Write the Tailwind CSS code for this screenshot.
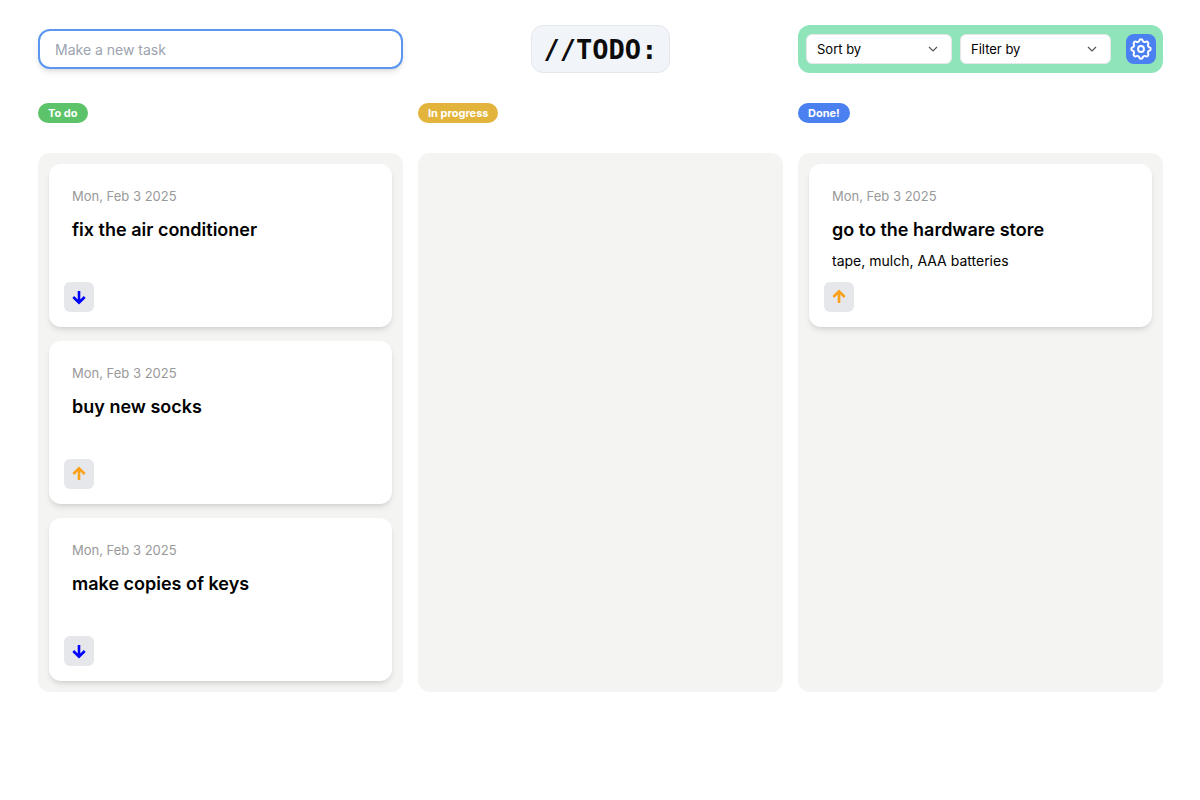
<!DOCTYPE html>
<html lang="en">
<head>
<meta charset="utf-8">
<meta name="viewport" content="width=device-width, initial-scale=1">
<title>//TODO:</title>
<script src="https://cdn.jsdelivr.net/npm/@tailwindcss/browser@4"></script>
</head>
<body class="bg-white text-black font-['Inter',sans-serif]">
<svg class="hidden" aria-hidden="true">
  <symbol id="down" viewBox="0 0 16 16"><path d="M8 2v12M2.3 8L8 13.7 13.7 8" fill="none" stroke="currentColor" stroke-width="2.6"/></symbol>
  <symbol id="up" viewBox="0 0 16 16"><path d="M8 14V2M2.3 8L8 2.3 13.7 8" fill="none" stroke="currentColor" stroke-width="2.6"/></symbol>
  <symbol id="chevron" viewBox="0 0 10 10"><path d="M1 3l4 4 4-4" fill="none" stroke="currentColor" stroke-width="1.2"/></symbol>
</svg>
<div class="pl-[38px] pr-[37px] pt-[25px]">
  <header class="grid grid-cols-3 gap-[15px] items-center">
    <form>
      <input aria-label="Make a new task" type="text" placeholder="Make a new task" class="block w-full h-10 px-[15px] text-[14px] rounded-xl border-2 border-[#5b97f0] bg-white shadow-md placeholder:text-[#9ca3af] outline-none">
    </form>
    <h1 class="justify-self-center rounded-xl border border-[#e4e8ed] bg-[#f1f5f9] h-12 px-3 pt-[2px] flex items-center font-['DejaVu_Sans_Mono',monospace] font-bold text-[27px] text-[#0c0c0c]">//TODO:</h1>
    <div class="flex items-center h-12 rounded-xl bg-[#8fe5b9] pl-2 pr-[7px] text-[13px]">
      <div class="relative flex-[146]">
        <select aria-label="Sort by" class="block w-full h-[30px] appearance-none rounded-md border border-[#e5e7eb] bg-white px-[10px] pt-px"><option>Sort by</option></select>
        <svg class="pointer-events-none absolute right-[14px] top-[10px] size-[10px] text-[#555]"><use href="#chevron"/></svg>
      </div>
      <div class="relative flex-[151] ml-2">
        <select aria-label="Filter by" class="block w-full h-[30px] appearance-none rounded-md border border-[#e5e7eb] bg-white px-[10px] pt-px"><option>Filter by</option></select>
        <svg class="pointer-events-none absolute right-[14px] top-[10px] size-[10px] text-[#555]"><use href="#chevron"/></svg>
      </div>
      <button type="button" aria-label="Settings" class="ml-[15px] size-[30px] shrink-0 flex items-center justify-center rounded-lg bg-[#4b80f0] text-white">
        <svg class="size-[26px]" viewBox="0 0 24 24" fill="none" stroke="currentColor" stroke-width="1.8" stroke-linecap="round" stroke-linejoin="round"><path d="M10.325 4.317c.426-1.756 2.924-1.756 3.35 0a1.724 1.724 0 002.573 1.066c1.543-.94 3.31.826 2.37 2.37a1.724 1.724 0 001.065 2.572c1.756.426 1.756 2.924 0 3.35a1.724 1.724 0 00-1.066 2.573c.94 1.543-.826 3.31-2.37 2.37a1.724 1.724 0 00-2.572 1.065c-.426 1.756-2.924 1.756-3.35 0a1.724 1.724 0 00-2.573-1.066c-1.543.94-3.31-.826-2.37-2.37a1.724 1.724 0 00-1.065-2.572c-1.756-.426-1.756-2.924 0-3.35a1.724 1.724 0 001.066-2.573c-.94-1.543.826-3.31 2.37-2.37.996.608 2.296.07 2.572-1.065z"/><circle cx="12" cy="12" r="2.7"/></svg>
      </button>
    </div>
  </header>

  <main class="mt-[30px] grid grid-cols-3 gap-[15px]">
    <section class="flex flex-col items-start">
      <h2 class="h-5 flex items-center rounded-full bg-[#5dc36a] px-[10px] text-[11px] font-bold text-white">To do</h2>
      <ul class="mt-[30px] w-full grow flex flex-col gap-[14px] rounded-xl bg-[#f4f4f3] p-[11px]">
        <li class="flex h-[163px] flex-col items-start rounded-xl bg-white pt-[22px] px-[15px] pb-[15px] shadow-md">
          <time class="px-2 text-[13px] leading-5 text-[#999]">Mon, Feb 3 2025</time>
          <h3 class="mt-[10px] px-2 text-[18px] leading-7 font-semibold">fix the air conditioner</h3>
          <button type="button" aria-label="Low priority" class="mt-auto size-[30px] flex items-center justify-center rounded-md bg-[#e5e7eb] text-[#0000ff]"><svg class="size-4"><use href="#down"/></svg></button>
        </li>
        <li class="flex h-[163px] flex-col items-start rounded-xl bg-white pt-[22px] px-[15px] pb-[15px] shadow-md">
          <time class="px-2 text-[13px] leading-5 text-[#999]">Mon, Feb 3 2025</time>
          <h3 class="mt-[10px] px-2 text-[18px] leading-7 font-semibold">buy new socks</h3>
          <button type="button" aria-label="High priority" class="mt-auto size-[30px] flex items-center justify-center rounded-md bg-[#e5e7eb] text-[#f9a11b]"><svg class="size-4"><use href="#up"/></svg></button>
        </li>
        <li class="flex h-[163px] flex-col items-start rounded-xl bg-white pt-[22px] px-[15px] pb-[15px] shadow-md">
          <time class="px-2 text-[13px] leading-5 text-[#999]">Mon, Feb 3 2025</time>
          <h3 class="mt-[10px] px-2 text-[18px] leading-7 font-semibold">make copies of keys</h3>
          <button type="button" aria-label="Low priority" class="mt-auto size-[30px] flex items-center justify-center rounded-md bg-[#e5e7eb] text-[#0000ff]"><svg class="size-4"><use href="#down"/></svg></button>
        </li>
      </ul>
    </section>
    <section class="flex flex-col items-start">
      <h2 class="h-5 flex items-center rounded-full bg-[#e2b43b] px-[10px] text-[11px] font-bold text-white">In progress</h2>
      <ul class="mt-[30px] w-full grow rounded-xl bg-[#f4f4f3] p-[11px]"></ul>
    </section>
    <section class="flex flex-col items-start">
      <h2 class="h-5 flex items-center rounded-full bg-[#4b80f0] px-[10px] text-[11px] font-bold text-white">Done!</h2>
      <ul class="mt-[30px] w-full grow flex flex-col gap-[14px] rounded-xl bg-[#f4f4f3] p-[11px]">
        <li class="flex h-[163px] flex-col items-start rounded-xl bg-white pt-[22px] px-[15px] pb-[15px] shadow-md">
          <time class="px-2 text-[13px] leading-5 text-[#999]">Mon, Feb 3 2025</time>
          <h3 class="mt-[10px] px-2 text-[18px] leading-7 font-semibold">go to the hardware store</h3>
          <p class="mt-[7px] px-2 text-[14px] leading-5">tape, mulch, AAA batteries</p>
          <button type="button" aria-label="High priority" class="mt-auto size-[30px] flex items-center justify-center rounded-md bg-[#e5e7eb] text-[#f9a11b]"><svg class="size-4"><use href="#up"/></svg></button>
        </li>
      </ul>
    </section>
  </main>
</div>
</body>
</html>
